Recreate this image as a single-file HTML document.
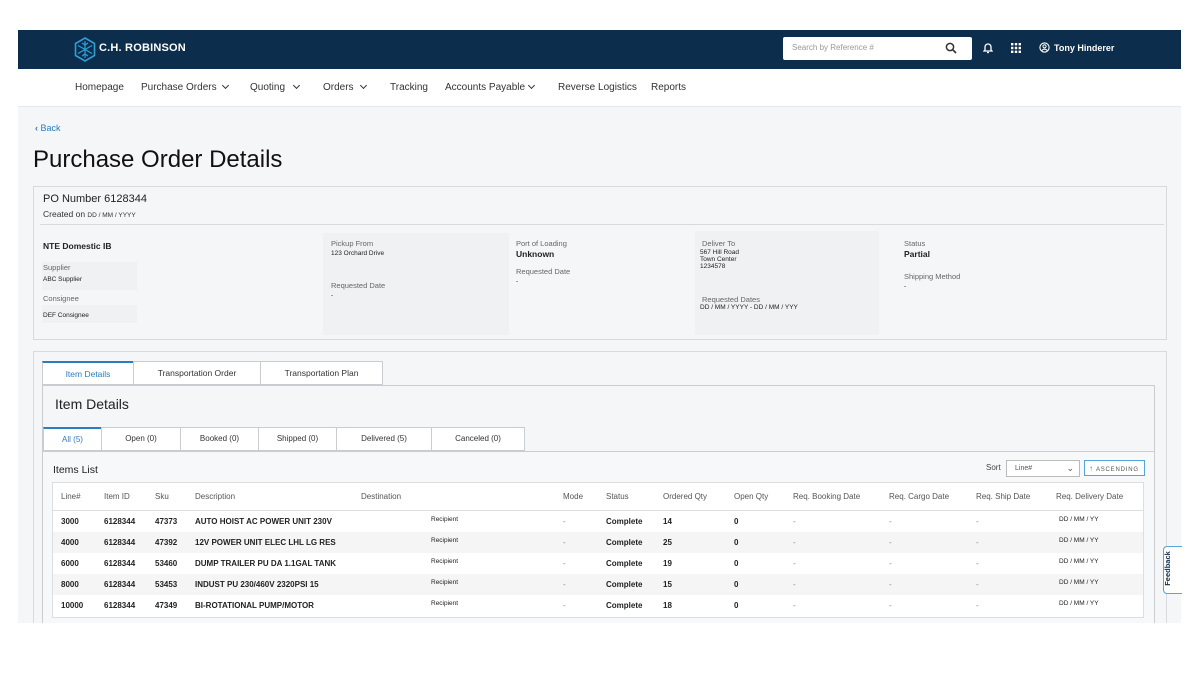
<!DOCTYPE html>
<html><head><meta charset="utf-8"><style>
*{box-sizing:border-box;margin:0;padding:0}
body{width:1200px;height:675px;background:#fff;font-family:"Liberation Sans",Arial,sans-serif;color:#222;position:relative;overflow:hidden}
.a{position:absolute;white-space:nowrap}
.hdr{left:18px;top:30px;width:1163px;height:39px;background:#0c2d4c}
.nav{left:18px;top:69px;width:1163px;height:38px;background:#fff;border-bottom:1px solid #e6e8ea}
.nav span{position:absolute;top:13px;font-size:10px;color:#333}
.nav i{position:absolute;top:14px;width:5px;height:5px;border-right:1.3px solid #333;border-bottom:1.3px solid #333;transform:rotate(45deg)}
.gray{left:18px;top:107px;width:1163px;height:516px;background:#f5f6f8}
.card{background:#f5f6f8;border:1px solid #d8dadd}
.lbl{font-size:7.5px;color:#666}
.val{font-size:6.5px;color:#222}
.box{background:#f0f1f2}
.tab{position:absolute;top:0;height:24px;border:1px solid #c9ccd0;background:#fff;font-size:8.5px;text-align:center;line-height:22px;color:#333}
.st{position:absolute;top:0;height:24px;border:1px solid #c9ccd0;background:#fff;font-size:8px;text-align:center;line-height:22px;color:#333}
.tbl{left:52px;top:482px;width:1092px;height:136px;background:#fff;border:1px solid #dcdfe2}
.r{position:absolute;left:0;width:1090px;height:21px;font-size:8px}
.r span{position:absolute;top:6px}
.b{font-weight:bold;color:#222}
</style></head><body>
<div class="a hdr">
 <svg class="a" style="left:56px;top:7px" width="22" height="25" viewBox="0 0 22 25"><path d="M11 1L20.5 6.5V18.5L11 24L1.5 18.5V6.5Z" fill="none" stroke="#2e9fd8" stroke-width="1.6"/><path d="M11 4V21M4 8.5L18 16.5M18 8.5L4 16.5M8 6L11 8L14 6M8 19L11 17L14 19" fill="none" stroke="#2e9fd8" stroke-width="1.2"/></svg>
 <div class="a" style="left:81px;top:12px;color:#fff;font-weight:bold;font-size:11px;letter-spacing:.2px">C.H. ROBINSON</div>
 <div class="a" style="left:765px;top:7px;width:189px;height:23px;background:#fff;border-radius:2px"><span class="a" style="left:9px;top:6px;font-size:8px;color:#999">Search by Reference #</span>
 <svg class="a" style="left:162px;top:5px" width="12" height="12" viewBox="0 0 12 12"><circle cx="5" cy="5" r="3.6" fill="none" stroke="#333" stroke-width="1.5"/><path d="M7.7 7.7L11 11" stroke="#333" stroke-width="1.7"/></svg></div>
 <svg class="a" style="left:965px;top:12px" width="10" height="12" viewBox="0 0 10 12"><path d="M2 8V5a3 3 0 016 0v3l1 1H1z" fill="none" stroke="#fff" stroke-width="1.3"/><path d="M4 10.5h2" stroke="#fff" stroke-width="1.3"/></svg>
 <svg class="a" style="left:993px;top:13px" width="10" height="10" viewBox="0 0 10 10" fill="#fff"><rect x="0" y="0" width="2.4" height="2.4"/><rect x="3.8" y="0" width="2.4" height="2.4"/><rect x="7.6" y="0" width="2.4" height="2.4"/><rect x="0" y="3.8" width="2.4" height="2.4"/><rect x="3.8" y="3.8" width="2.4" height="2.4"/><rect x="7.6" y="3.8" width="2.4" height="2.4"/><rect x="0" y="7.6" width="2.4" height="2.4"/><rect x="3.8" y="7.6" width="2.4" height="2.4"/><rect x="7.6" y="7.6" width="2.4" height="2.4"/></svg>
 <svg class="a" style="left:1021px;top:12px" width="11" height="11" viewBox="0 0 11 11"><circle cx="5.5" cy="5.5" r="4.6" fill="none" stroke="#fff" stroke-width="1.1"/><circle cx="5.5" cy="4.3" r="1.6" fill="none" stroke="#fff" stroke-width="1"/><path d="M2.8 8.6c1.5-2 4-2 5.4 0" fill="none" stroke="#fff" stroke-width="1"/></svg>
 <div class="a" style="left:1036px;top:13px;color:#fff;font-weight:bold;font-size:9px">Tony Hinderer</div>
</div>
<div class="a nav">
 <span style="left:57px">Homepage</span>
 <span style="left:123px">Purchase Orders</span><i style="left:205px"></i>
 <span style="left:232px">Quoting</span><i style="left:276px"></i>
 <span style="left:305px">Orders</span><i style="left:343px"></i>
 <span style="left:372px">Tracking</span>
 <span style="left:427px">Accounts Payable</span><i style="left:511px"></i>
 <span style="left:540px">Reverse Logistics</span>
 <span style="left:633px">Reports</span>
</div>
<div class="a gray"></div>
<div class="a" style="left:35px;top:123px;font-size:9px;color:#2b7dbf"><b>‹</b> Back</div>
<div class="a" style="left:33px;top:146px;font-size:24px;color:#111">Purchase Order Details</div>

<div class="a card" style="left:33px;top:186px;width:1134px;height:154px">
 <div class="a" style="left:9px;top:6px;font-size:11px;color:#222">PO Number 6128344</div>
 <div class="a" style="left:9px;top:22px;font-size:8.5px;color:#333">Created on <span style="font-size:6.5px">DD / MM / YYYY</span></div>
 <div class="a" style="left:6px;top:37px;width:1124px;border-top:1px solid #d8dadd"></div>
 <div class="a" style="left:9px;top:54px;font-size:8.5px;font-weight:bold">NTE Domestic IB</div>
 <div class="a box" style="left:8px;top:75px;width:95px;height:28px"></div>
 <div class="a lbl" style="left:9px;top:76px">Supplier</div>
 <div class="a val" style="left:9px;top:89px">ABC Supplier</div>
 <div class="a lbl" style="left:9px;top:107px">Consignee</div>
 <div class="a box" style="left:8px;top:118px;width:95px;height:18px"></div>
 <div class="a val" style="left:9px;top:125px">DEF Consignee</div>
 <div class="a box" style="left:289px;top:46px;width:186px;height:102px"></div>
 <div class="a lbl" style="left:297px;top:52px">Pickup From</div>
 <div class="a val" style="left:297px;top:63px">123 Orchard Drive</div>
 <div class="a lbl" style="left:297px;top:94px">Requested Date</div>
 <div class="a val" style="left:297px;top:105px">-</div>
 <div class="a lbl" style="left:482px;top:52px">Port of Loading</div>
 <div class="a" style="left:482px;top:62px;font-size:8.5px;font-weight:bold">Unknown</div>
 <div class="a lbl" style="left:482px;top:80px">Requested Date</div>
 <div class="a val" style="left:482px;top:91px">-</div>
 <div class="a box" style="left:661px;top:44px;width:184px;height:104px"></div>
 <div class="a lbl" style="left:668px;top:52px">Deliver To</div>
 <div class="a val" style="left:666px;top:62px;line-height:7px">567 Hill Road<br>Town Center<br>1234578</div>
 <div class="a lbl" style="left:668px;top:108px">Requested Dates</div>
 <div class="a val" style="left:666px;top:117px">DD / MM / YYYY - DD / MM / YYY</div>
 <div class="a lbl" style="left:870px;top:52px">Status</div>
 <div class="a" style="left:870px;top:62px;font-size:8.5px;font-weight:bold">Partial</div>
 <div class="a lbl" style="left:870px;top:85px">Shipping Method</div>
 <div class="a val" style="left:870px;top:96px">-</div>
</div>

<div class="a card" style="left:33px;top:351px;width:1134px;height:290px">
 <div class="a" style="left:8px;top:9px;width:341px;height:24px">
  <div class="tab" style="left:0;width:92px;border-top:2px solid #2b7dbf;color:#2b7dbf">Item Details</div>
  <div class="tab" style="left:91px;width:128px">Transportation Order</div>
  <div class="tab" style="left:218px;width:123px">Transportation Plan</div>
 </div>
 <div class="a" style="left:8px;top:33px;width:1113px;height:260px;border:1px solid #c9ccd0;background:#f5f6f8"></div>
 <div class="a" style="left:21px;top:44px;font-size:14px;color:#222">Item Details</div>
 <div class="a" style="left:9px;top:75px;width:512px;height:24px">
  <div class="st" style="left:0;width:59px;border-top:2px solid #2b7dbf;color:#2b7dbf">All (5)</div>
  <div class="st" style="left:58px;width:80px">Open (0)</div>
  <div class="st" style="left:137px;width:79px">Booked (0)</div>
  <div class="st" style="left:215px;width:79px">Shipped (0)</div>
  <div class="st" style="left:293px;width:96px">Delivered (5)</div>
  <div class="st" style="left:388px;width:94px">Canceled (0)</div>
 </div>
 <div class="a" style="left:9px;top:99px;width:1111px;height:193px;background:#f7f8f9;border-top:1px solid #c9ccd0"></div>
 <div class="a" style="left:19px;top:112px;font-size:10.5px;color:#222">Items List</div>
 <div class="a" style="left:952px;top:111px;font-size:8px;color:#444">Sort</div>
 <div class="a" style="left:972px;top:108px;width:74px;height:17px;border:1px solid #bbb;background:#fff;font-size:7px;color:#555;padding:4px 8px">Line#<span style="position:absolute;right:5px;top:2px;font-size:9px">⌄</span></div>
 <div class="a" style="left:1050px;top:108px;width:61px;height:16px;border:1px solid #5aa5d8;background:#fff;font-size:6px;color:#555;padding:3px 4px;letter-spacing:.8px"><span style="color:#2b7dbf;font-size:8px">↑</span> ASCENDING</div>
</div>

<div class="a tbl">
 <div class="r" style="top:0;height:28px;border-bottom:1px solid #dcdfe2;color:#555">
  <span style="left:8px;top:9px">Line#</span><span style="left:51px;top:9px">Item ID</span><span style="left:102px;top:9px">Sku</span><span style="left:142px;top:9px">Description</span><span style="left:308px;top:9px">Destination</span><span style="left:510px;top:9px">Mode</span><span style="left:553px;top:9px">Status</span><span style="left:610px;top:9px">Ordered Qty</span><span style="left:681px;top:9px">Open Qty</span><span style="left:740px;top:9px">Req. Booking Date</span><span style="left:836px;top:9px">Req. Cargo Date</span><span style="left:923px;top:9px">Req. Ship Date</span><span style="left:1003px;top:9px">Req. Delivery Date</span>
 </div>
 <div class="r" style="top:28px"><span class="b" style="left:8px">3000</span><span class="b" style="left:51px">6128344</span><span class="b" style="left:102px">47373</span><span class="b" style="left:142px">AUTO HOIST AC POWER UNIT 230V</span><span style="left:378px;top:5px;font-size:6.5px">Recipient</span><span style="left:510px;color:#888">-</span><span class="b" style="left:553px">Complete</span><span class="b" style="left:610px">14</span><span class="b" style="left:681px">0</span><span style="left:740px;color:#888">-</span><span style="left:836px;color:#888">-</span><span style="left:923px;color:#888">-</span><span style="left:1006px;top:5px;font-size:6.5px">DD / MM / YY</span></div>
 <div class="r" style="top:49px;background:#f5f5f5"><span class="b" style="left:8px">4000</span><span class="b" style="left:51px">6128344</span><span class="b" style="left:102px">47392</span><span class="b" style="left:142px">12V POWER UNIT ELEC LHL LG RES</span><span style="left:378px;top:5px;font-size:6.5px">Recipient</span><span style="left:510px;color:#888">-</span><span class="b" style="left:553px">Complete</span><span class="b" style="left:610px">25</span><span class="b" style="left:681px">0</span><span style="left:740px;color:#888">-</span><span style="left:836px;color:#888">-</span><span style="left:923px;color:#888">-</span><span style="left:1006px;top:5px;font-size:6.5px">DD / MM / YY</span></div>
 <div class="r" style="top:70px"><span class="b" style="left:8px">6000</span><span class="b" style="left:51px">6128344</span><span class="b" style="left:102px">53460</span><span class="b" style="left:142px">DUMP TRAILER PU DA 1.1GAL TANK</span><span style="left:378px;top:5px;font-size:6.5px">Recipient</span><span style="left:510px;color:#888">-</span><span class="b" style="left:553px">Complete</span><span class="b" style="left:610px">19</span><span class="b" style="left:681px">0</span><span style="left:740px;color:#888">-</span><span style="left:836px;color:#888">-</span><span style="left:923px;color:#888">-</span><span style="left:1006px;top:5px;font-size:6.5px">DD / MM / YY</span></div>
 <div class="r" style="top:91px;background:#f5f5f5"><span class="b" style="left:8px">8000</span><span class="b" style="left:51px">6128344</span><span class="b" style="left:102px">53453</span><span class="b" style="left:142px">INDUST PU 230/460V 2320PSI 15</span><span style="left:378px;top:5px;font-size:6.5px">Recipient</span><span style="left:510px;color:#888">-</span><span class="b" style="left:553px">Complete</span><span class="b" style="left:610px">15</span><span class="b" style="left:681px">0</span><span style="left:740px;color:#888">-</span><span style="left:836px;color:#888">-</span><span style="left:923px;color:#888">-</span><span style="left:1006px;top:5px;font-size:6.5px">DD / MM / YY</span></div>
 <div class="r" style="top:112px"><span class="b" style="left:8px">10000</span><span class="b" style="left:51px">6128344</span><span class="b" style="left:102px">47349</span><span class="b" style="left:142px">BI-ROTATIONAL PUMP/MOTOR</span><span style="left:378px;top:5px;font-size:6.5px">Recipient</span><span style="left:510px;color:#888">-</span><span class="b" style="left:553px">Complete</span><span class="b" style="left:610px">18</span><span class="b" style="left:681px">0</span><span style="left:740px;color:#888">-</span><span style="left:836px;color:#888">-</span><span style="left:923px;color:#888">-</span><span style="left:1006px;top:5px;font-size:6.5px">DD / MM / YY</span></div>
</div>

<div class="a" style="left:0;top:623px;width:1200px;height:52px;background:#fff"></div>
<div class="a" style="left:1163px;top:546px;width:19px;height:48px;background:#fff;border:1px solid #5aa5d8;border-right:none;border-radius:4px 0 0 4px"></div>
<div class="a" style="left:1150px;top:564px;font-size:7.5px;font-weight:bold;color:#0c2d4c;transform:rotate(-90deg);transform-origin:center">Feedback</div>
</body></html>
